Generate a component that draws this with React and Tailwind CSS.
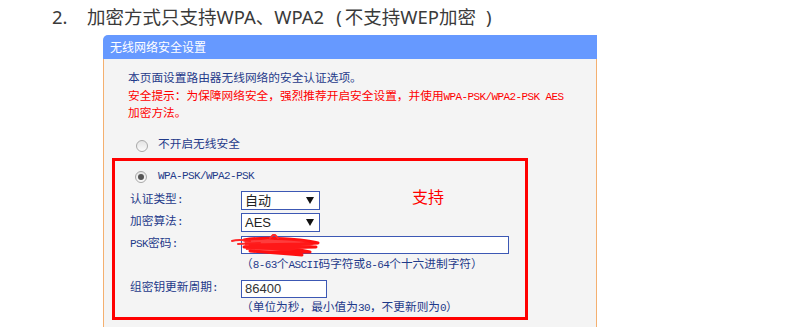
import React from "react";

const MONO = { fontFamily: '"Liberation Mono", "Noto Sans CJK SC", monospace' };
const SANS = { fontFamily: '"Liberation Sans", "Noto Sans CJK SC", sans-serif' };
const TITLE = { fontFamily: '"Noto Sans", "Noto Sans CJK SC", sans-serif' };

// half-width latin in the router page is narrower than the CJK glyphs
function A({ children }) {
  return <span className="text-[11px] tracking-[-0.6px]">{children}</span>;
}

function Radio({ checked }) {
  return (
    <span className="w-[12px] h-[12px] rounded-full border border-[#a8a8a8] bg-gradient-to-b from-[#e4e4e4] to-[#fbfbfb] flex items-center justify-center shrink-0">
      {checked && <span className="w-[6px] h-[6px] rounded-full bg-[#555]" />}
    </span>
  );
}

function FakeSelect({ value }) {
  return (
    <div className="w-[79px] h-[19px] border border-[#3c58b4] bg-white flex items-center justify-between pl-[3px] pr-[5px] text-[13px] text-[#222]" style={SANS}>
      <span className="leading-none">{value}</span>
      <svg width="8" height="7" viewBox="0 0 8 7">
        <path d="M0 0 H8 L4 7 Z" fill="#111" />
      </svg>
    </div>
  );
}

function Scribble() {
  return (
    <svg className="absolute left-[-12px] top-[-3px] pointer-events-none" width="100" height="24" viewBox="0 0 100 24">
      <path d="M14 6 C30 3 50 4 70 6 C78 7 84 8 88 9 L70 10 L20 11 L60 12 L86 13 L40 14 L14 13 L70 16 L80 18 L40 18 L20 17 L60 20 L72 21" fill="none" stroke="#ff1010" strokeWidth="3" strokeLinecap="round" strokeLinejoin="round" />
      <path d="M2 7 C8 5 14 6 20 7 M40 4 L44 0 L48 4 M8 10 L30 9" fill="none" stroke="#ff2a2a" strokeWidth="2" strokeLinecap="round" />
      <path d="M14 5 L74 6 L84 11 L60 17 L16 16 Z" fill="#ff1a1a" opacity="0.85" />
    </svg>
  );
}

export default function App() {
  return (
    <div className="w-[790px] h-[327px] bg-white overflow-hidden">
      {/* Title */}
      <div className="h-[35px] flex items-center text-[18.5px] text-[#3a3a3a] pb-[1px]" style={TITLE}>
        <span className="ml-[52px] w-[35px]">2.</span>
        <span>加密方式只支持WPA、WPA2</span>
        <span className="ml-[12px] mr-[3px]">(</span>
        <span>不支持WEP加密</span>
        <span className="ml-[10px]">)</span>
      </div>

      {/* Panel */}
      <div className="ml-[103px] w-[494px]">
        <div className="h-[24px] bg-[#6699ff] rounded-tl-[5px] flex items-center pl-[7px] text-white text-[12px]" style={{ fontFamily: '"Noto Sans CJK SC", sans-serif' }}>
          无线网络安全设置
        </div>
        <div className="bg-[#f4f4f4] border-l border-r border-[#f4b070] pt-[12px] pb-[20px] text-[11.7px] text-[#1f3a8a]" style={MONO}>
          <div className="pl-[24px] leading-[17.5px]">
            <div>本页面设置路由器无线网络的安全认证选项。</div>
            <div className="text-[#ff0000]">安全提示：为保障网络安全，强烈推荐开启安全设置，并使用<A>WPA-PSK/WPA2-PSK AES</A></div>
            <div className="text-[#ff0000]">加密方法。</div>
          </div>

          <div className="h-[18px] mt-[13px] pl-[32px] flex items-center gap-[10px]">
            <Radio />
            <span>不开启无线安全</span>
          </div>

          {/* Red highlight box */}
          <div className="relative ml-[8px] mt-[3px] w-[416px] h-[162px] border-[3px] border-[#ff0000]">
            <div className="h-[18px] mt-[7px] pl-[20px] flex items-center gap-[11px]">
              <Radio checked />
              <A>WPA-PSK/WPA2-PSK</A>
            </div>

            <div className="pl-[15px]">
              <div className="h-[22px] mt-[4px] flex items-center">
                <span className="w-[111px]">认证类型:</span>
                <FakeSelect value="自动" />
              </div>
              <div className="h-[22px] flex items-center">
                <span className="w-[111px]">加密算法:</span>
                <FakeSelect value="AES" />
              </div>
              <div className="h-[22px] flex items-center">
                <span className="w-[111px]"><A>PSK</A>密码:</span>
                <div className="relative w-[268px] h-[18px] border border-[#3c58b4] bg-white">
                  <Scribble />
                </div>
              </div>
              <div className="h-[20px] flex items-center pl-[111px]">
                <span>（<A>8-63</A>个<A>ASCII</A>码字符或<A>8-64</A>个十六进制字符）</span>
              </div>
              <div className="h-[22px] mt-[2px] flex items-center">
                <span className="w-[111px]">组密钥更新周期:</span>
                <div className="w-[86px] h-[18px] border border-[#3c58b4] bg-white flex items-center pl-[3px] text-[13px] text-[#333]" style={SANS}>
                  86400
                </div>
              </div>
              <div className="h-[18px] flex items-center pl-[111px]">
                <span>（单位为秒，最小值为<A>30</A>，不更新则为<A>0</A>）</span>
              </div>
            </div>

            <span className="absolute left-[297px] top-[23px] text-[16px] text-[#ff0000]" style={{ fontFamily: '"Noto Sans CJK SC", sans-serif' }}>
              支持
            </span>
          </div>
        </div>
      </div>
    </div>
  );
}
